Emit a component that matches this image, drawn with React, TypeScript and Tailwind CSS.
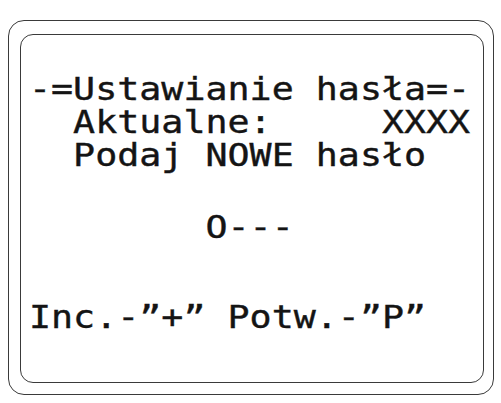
const lines = [
  "-=Ustawianie hasła=-",
  "  Aktualne:     XXXX",
  "  Podaj NOWE hasło",
];

export default function App() {
  return (
    <div className="h-[403px] w-[501px] overflow-hidden bg-white pl-[8px] pt-[20px]">
      <div className="h-[375px] w-[486px] rounded-[16px] border-[1.5px] border-[#3a3a3a] pl-[11px] pr-[9px] pt-[13px] pb-[11px]">
        <div className="h-full w-full overflow-hidden rounded-[13px] border-[1.5px] border-[#3a3a3a] pl-[8px] pt-[38px]">
          {/* LCD-style text: monospace stretched sideways */}
          <div className="origin-left scale-x-[1.145] font-['DejaVu_Sans_Mono',monospace] text-[32px] leading-[33px] text-[#141414] whitespace-pre [-webkit-text-stroke:0.4px_#141414]">
            {lines.map((l) => (
              <div key={l}>{l}</div>
            ))}
            <div className="mt-[39px]">{"        O---"}</div>
            <div className="mt-[57px]">{"Inc.-”+” Potw.-”P”"}</div>
          </div>
        </div>
      </div>
    </div>
  );
}
